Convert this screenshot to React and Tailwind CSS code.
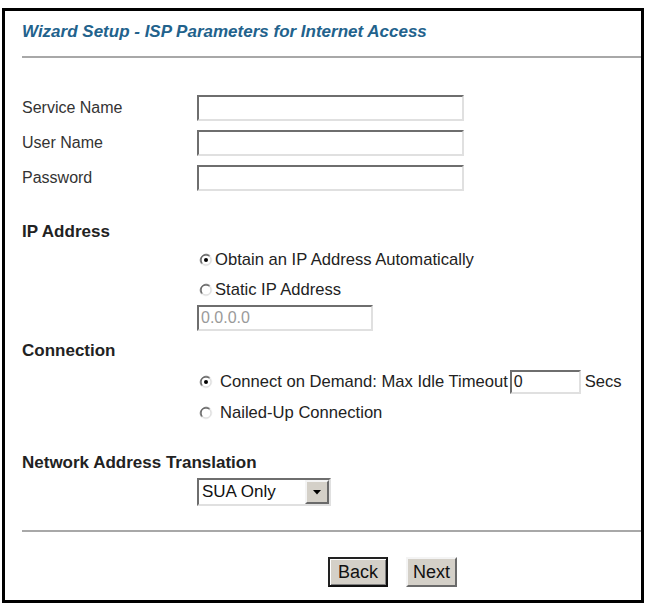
import React from "react";

const font = { fontFamily: '"Liberation Sans", Arial, sans-serif' };

function Radio({ checked }) {
  return (
    <svg width="14" height="14" viewBox="0 0 14 14" className="shrink-0">
      <circle cx="7" cy="7" r="6" fill="#fff" />
      <path d="M2.76 11.24 A6 6 0 0 1 11.24 2.76" fill="none" stroke="#8a8a8a" strokeWidth="1" />
      <path d="M11.24 2.76 A6 6 0 0 1 2.76 11.24" fill="none" stroke="#f0f0f0" strokeWidth="1" />
      <path d="M3.46 10.54 A5 5 0 0 1 10.54 3.46" fill="none" stroke="#404040" strokeWidth="1" />
      <path d="M10.54 3.46 A5 5 0 0 1 3.46 10.54" fill="none" stroke="#d8d8d8" strokeWidth="1" />
      {checked && <circle cx="7" cy="7" r="2" fill="#000" />}
    </svg>
  );
}

function TextBox({ w, h = 26, value, gray }) {
  return (
    <div
      className={`${w} bg-white border-2 border-t-[#6e6e6e] border-l-[#6e6e6e] border-b-[#e0e0e0] border-r-[#e0e0e0] flex items-center px-[2px] text-[16px] leading-none ${gray ? "text-[#9a9a9a]" : "text-[#222]"}`}
      style={{ height: h }}
    >
      {value}
    </div>
  );
}

function FieldRow({ label, first }) {
  return (
    <div className={`flex items-center h-[26px] ${first ? "mt-[37px]" : "mt-[9px]"}`}>
      <div className="w-[175px] text-[16px] text-[#333]">{label}</div>
      <TextBox w="w-[267px]" />
    </div>
  );
}

function RadioRow({ checked, children, className }) {
  return (
    <div className={`flex items-center pl-[175px] ${className}`}>
      <div className="ml-[2px] mr-[2px]">
        <Radio checked={checked} />
      </div>
      {children}
    </div>
  );
}

function Heading({ children, className }) {
  return <div className={`h-[20px] leading-[20px] text-[17px] font-bold text-[#222] ${className}`}>{children}</div>;
}

function Button({ children, focused }) {
  return (
    <div
      className={`h-[30px] flex items-center justify-center bg-[#d4d0c8] text-[18px] text-[#111] ${
        focused
          ? "w-[60px] border-2 border-t-[#222] border-l-[#222] border-b-[#111] border-r-[#111] shadow-[inset_1px_1px_0_#fff,inset_-1px_-1px_0_#808080]"
          : "w-[51px] border-2 border-t-[#f4f4f4] border-l-[#f4f4f4] border-b-[#6a6a6a] border-r-[#6a6a6a]"
      }`}
    >
      {children}
    </div>
  );
}

export default function App() {
  return (
    <div className="w-[646px] h-[604px] bg-white pt-[8px] pl-[2px]" style={font}>
      <div className="w-[642px] h-[595px] border-[3px] border-black flex flex-col">
        <div className="mt-[11px] ml-[17px] h-[20px] leading-[20px] text-[17px] font-bold italic text-[#22628c]">
          Wizard Setup - ISP Parameters for Internet Access
        </div>
        <div className="mt-[14px] ml-[17px] h-[2px] bg-[#a8a8a8]" />

        <div className="pl-[17px] flex flex-col">
          <FieldRow label="Service Name" first />
          <FieldRow label="User Name" />
          <FieldRow label="Password" />

          <Heading className="mt-[31px]">IP Address</Heading>
          <RadioRow checked className="mt-[8px] h-[20px]">
            <span className="text-[16.6px] text-[#222]">Obtain an IP Address Automatically</span>
          </RadioRow>
          <RadioRow className="mt-[10px] h-[20px]">
            <span className="text-[16.6px] text-[#222]">Static IP Address</span>
          </RadioRow>
          <div className="mt-[5px] pl-[175px]">
            <TextBox w="w-[176px]" value="0.0.0.0" gray />
          </div>

          <Heading className="mt-[10px]">Connection</Heading>
          <RadioRow checked className="mt-[9px] h-[24px]">
            <span className="ml-[5px] text-[16.6px] text-[#222]">Connect on Demand: Max Idle Timeout</span>
            <div className="ml-[2px]">
              <TextBox w="w-[71px]" h={24} value="0" />
            </div>
            <span className="ml-[4px] text-[16.6px] text-[#222]">Secs</span>
          </RadioRow>
          <RadioRow className="mt-[9px] h-[20px]">
            <span className="ml-[5px] text-[16.6px] text-[#222]">Nailed-Up Connection</span>
          </RadioRow>

          <Heading className="mt-[30px]">Network Address Translation</Heading>
          <div className="mt-[5px] pl-[175px]">
            <div className="w-[134px] h-[28px] bg-white border-2 border-t-[#6e6e6e] border-l-[#6e6e6e] border-b-[#e0e0e0] border-r-[#e0e0e0] flex items-center">
              <span className="flex-1 pl-[3px] text-[17px] text-[#111]">SUA Only</span>
              <div className="w-[24px] h-[24px] bg-[#d4d0c8] border-2 border-t-[#f4f4f4] border-l-[#f4f4f4] border-b-[#6a6a6a] border-r-[#6a6a6a] flex items-center justify-center">
                <svg width="8" height="5" viewBox="0 0 8 5">
                  <path d="M0 0 H8 L4 4.5 Z" fill="#000" />
                </svg>
              </div>
            </div>
          </div>
        </div>

        <div className="mt-[24px] ml-[17px] h-[2px] bg-[#a8a8a8]" />

        <div className="mt-[25px] flex gap-[18px] ml-[323px]">
          <Button focused>Back</Button>
          <Button>Next</Button>
        </div>
      </div>
    </div>
  );
}
